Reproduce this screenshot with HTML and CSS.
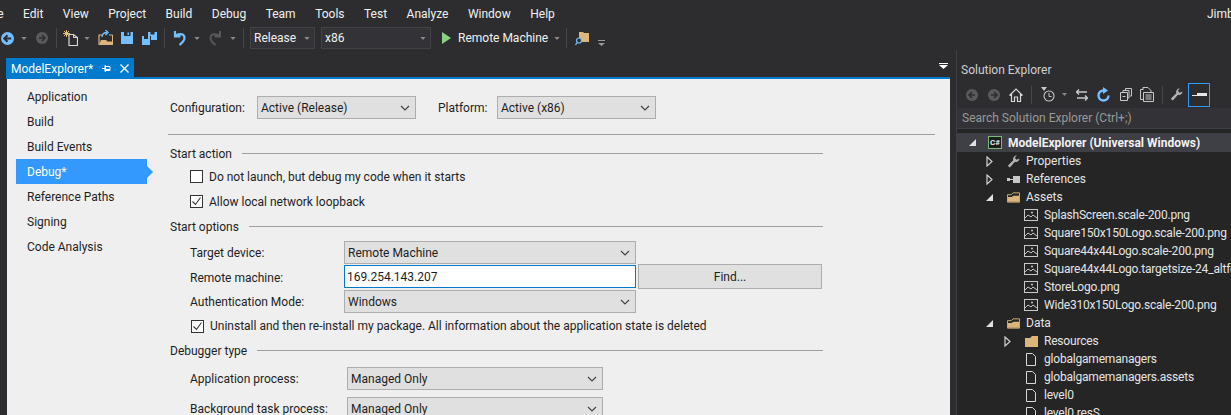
FILE: index.html
```html
<!DOCTYPE html>
<html lang="en">
<head>
    <meta charset="UTF-8">
    <title>ModelExplorer - Visual Studio</title>
    <link rel="stylesheet" href="styles.css">
</head>
<body>
    <svg class="defs" width="0" height="0">
        <symbol id="chev" viewBox="0 0 10 6"><path d="M1 1l4 4 4-4" fill="none" stroke="#444" stroke-width="1.2"/></symbol>
        <symbol id="dd" viewBox="0 0 7 4"><path d="M0 0h7L3.500 4z" fill="#8a8a8a"/></symbol>
        <symbol id="img" viewBox="0 0 14 12"><rect x=".5" y=".5" width="13" height="11" fill="none" stroke="#c8c8c8"/><path d="M1 9l3-3 3 2 2-2 4 3" fill="none" stroke="#c8c8c8"/><circle cx="8" cy="3.500" r="1" fill="#c8c8c8"/></symbol>
        <symbol id="doc" viewBox="0 0 11 13"><path d="M1 .5h6l3 3v9H1z" fill="none" stroke="#d8d8d8"/></symbol>
        <symbol id="folder" viewBox="0 0 14 11"><path d="M.5 10.500V2.500h4l2-2h7v10z" fill="#252526" stroke="#dcb67a"/><path d="M1 10V5h4l2-1.500h6V10z" fill="#dcb67a"/></symbol>
        <symbol id="open" viewBox="0 0 7 11"><path d="M1 1l5 4.500L1 10z" fill="none" stroke="#d0d0d0" stroke-width="1.200"/></symbol>
        <symbol id="down" viewBox="0 0 7 7"><path d="M7 0v7H0z" fill="#e0e0e0"/></symbol>
        <symbol id="wrench" viewBox="0 0 13 13"><path d="M12.500 3.500A3.500 3.500 0 0 1 8 6.800L2.800 12.500 .8 10.800 6.300 5.200A3.500 3.500 0 0 1 9.800.5L7.800 2.700 9.500 4.700z" fill="#b4b4b4"/></symbol>
        <symbol id="circ" viewBox="0 0 12 12"><circle cx="6" cy="6" r="6" fill="#5a5a5c"/><path d="M3 6h6M6 3l3 3-3 3" fill="none" stroke="#2d2d30" stroke-width="1.600"/></symbol>
    </svg>

    <div class="menubar">
        <div class="menu-items">
            <span class="file-menu">File</span>
            <span>Edit</span><span>View</span><span>Project</span><span>Build</span><span>Debug</span><span>Team</span><span>Tools</span><span>Test</span><span>Analyze</span><span>Window</span><span>Help</span>
        </div>
        <span class="user">Jimbo</span>
    </div>

    <div class="toolbar">
        <svg class="ti w-back" width="13" height="13" viewBox="0 0 12 12"><circle cx="6" cy="6" r="6" fill="#75beff"/><path d="M9.500 6H3M6 3L3 6l3 3" fill="none" stroke="#2d2d30" stroke-width="1.800"/></svg>
        <svg class="ti w-dd1" width="6" height="3"><use href="#dd"/></svg>
        <svg class="ti w-fwd" width="12" height="12"><use href="#circ"/></svg>
        <i class="tsep s1"></i>
        <svg class="ti w-new" width="15" height="16" viewBox="0 0 15 16"><path d="M6 4.500h4.500l4 3v8H6z" fill="none" stroke="#d8d8d8" stroke-width="1.200"/><path d="M10.500 4.500v3h4" fill="none" stroke="#d8d8d8"/><path d="M3.500 0v7M0 3.500h7M1 1l5 5M6 1L1 6" stroke="#e8c27a"/></svg>
        <svg class="ti w-dd2" width="6" height="3"><use href="#dd"/></svg>
        <svg class="ti w-open" width="15" height="16" viewBox="0 0 15 16"><path d="M1 15V5h3" fill="none" stroke="#dcb67a" stroke-width="1.200"/><path d="M14.500 15V5H11" fill="none" stroke="#dcb67a"/><path d="M1 15l2-5h5l1.500 1.500H14V15z" fill="#dcb67a"/><path d="M4 7c0-3 2-4.500 5-4.500M7.500 0L10 2.500 7.500 5" fill="none" stroke="#75beff" stroke-width="1.400"/></svg>
        <svg class="ti w-save" width="12" height="12" viewBox="0 0 12 12"><path d="M0 0h12v12H0z" fill="#75beff"/><path d="M3 0h6.500v4H3z" fill="#2d2d30"/><path d="M6.500 .5h1.500v2.500H6.500z" fill="#75beff"/></svg>
        <svg class="ti w-saveall" width="15" height="13" viewBox="0 0 15 13"><path d="M6 0h9v8H9V4H6z" fill="#75beff"/><path d="M8.500 0h4v2.500h-4z" fill="#2d2d30"/><path d="M0 4h8v9H0z" fill="#75beff"/><path d="M2 4h4v3H2z" fill="#2d2d30"/></svg>
        <i class="tsep s2"></i>
        <svg class="ti w-undo" width="13" height="16" viewBox="0 0 13 16"><path d="M2 1v5.500h5.500M2.500 6C5 3.500 11.500 3 11.500 8c0 3-2 4.500-5 7" fill="none" stroke="#75beff" stroke-width="2.200"/></svg>
        <svg class="ti w-dd3" width="6" height="3"><use href="#dd"/></svg>
        <svg class="ti w-redo" width="13" height="16" viewBox="0 0 13 16"><path d="M11 1v5.500H5.500M10.500 6C8 3.500 1.500 3 1.500 8c0 3 2 4.500 5 7" fill="none" stroke="#58585a" stroke-width="2"/></svg>
        <svg class="ti w-dd4" width="6" height="3"><use href="#dd"/></svg>
        <i class="tsep s3"></i>
        <div class="combo combo-config"><span>Release</span><svg width="6" height="3"><use href="#dd"/></svg></div>
        <div class="combo combo-plat"><span>x86</span><svg width="6" height="3"><use href="#dd"/></svg></div>
        <svg class="ti w-play" width="9" height="12" viewBox="0 0 9 12"><path d="M0 0l9 6-9 6z" fill="#89d185"/></svg>
        <span class="run-label">Remote Machine</span>
        <svg class="ti w-dd5" width="6" height="3"><use href="#dd"/></svg>
        <i class="tsep s4"></i>
        <svg class="ti w-find" width="15" height="15" viewBox="0 0 15 15"><path d="M4 1h4l1 1h5v9H6V7H4z" fill="#dcb67a"/><circle cx="4" cy="9.500" r="2.500" fill="#2d2d30" stroke="#75beff" stroke-width="1.200"/><path d="M2.200 11.500L.5 14" stroke="#75beff" stroke-width="1.300"/></svg>
        <svg class="ti w-over" width="7" height="6" viewBox="0 0 7 6"><path d="M0 0h7v1H0zM0 3h7L3.500 6z" fill="#9a9a9a"/></svg>
    </div>

    <div class="workspace">
        <div class="document">
            <div class="tabstrip">
                <div class="tab">
                    <span>ModelExplorer*</span>
                    <svg width="9" height="9" viewBox="0 0 9 9"><path d="M0 4.500h3M3 1.500h.5v6H3zM3.500 2.500H8v4H3.500M3.500 5.500H8" fill="none" stroke="#fff"/></svg>
                    <svg width="9" height="9" viewBox="0 0 9 9"><path d="M.5.500l8 8M8.500.5l-8 8" stroke="#fff" stroke-width="1.300"/></svg>
                </div>
                <svg class="tab-more" width="9" height="6" viewBox="0 0 9 6"><path d="M0 0h9v1H0zM0 2h9L4.500 6z" fill="#fff"/></svg>
            </div>
            <div class="page">
                <ul class="prop-nav">
                    <li>Application</li>
                    <li>Build</li>
                    <li>Build Events</li>
                    <li class="active">Debug*</li>
                    <li>Reference Paths</li>
                    <li>Signing</li>
                    <li>Code Analysis</li>
                </ul>
                <div class="form">
                    <div class="config-row">
                        <label class="config-label">Configuration:</label>
                        <div class="select config-select">Active (Release)<svg width="10" height="6"><use href="#chev"/></svg></div>
                        <label class="platform-label">Platform:</label>
                        <div class="select config-select">Active (x86)<svg width="10" height="6"><use href="#chev"/></svg></div>
                    </div>
                    <hr class="rule">

                    <div class="group-head"><span>Start action</span><i></i></div>
                    <div class="check-row first"><b class="box"></b>Do not launch, but debug my code when it starts</div>
                    <div class="check-row"><b class="box"><svg width="11" height="11" viewBox="0 0 11 11"><path d="M1.500 5.500l3 3 5-7" fill="none" stroke="#333" stroke-width="1.100"/></svg></b>Allow local network loopback</div>

                    <div class="group-head"><span>Start options</span><i></i></div>
                    <div class="field target-row">
                        <label>Target device:</label>
                        <div class="select wide">Remote Machine<svg width="10" height="6"><use href="#chev"/></svg></div>
                    </div>
                    <div class="field remote-row">
                        <label>Remote machine:</label>
                        <div class="text-input">169.254.143.207</div>
                        <div class="find-btn">Find...</div>
                    </div>
                    <div class="field auth-row">
                        <label>Authentication Mode:</label>
                        <div class="select wide">Windows<svg width="10" height="6"><use href="#chev"/></svg></div>
                    </div>
                    <div class="check-row uninstall"><b class="box"><svg width="11" height="11" viewBox="0 0 11 11"><path d="M1.500 5.500l3 3 5-7" fill="none" stroke="#333" stroke-width="1.100"/></svg></b>Uninstall and then re-install my package. All information about the application state is deleted</div>

                    <div class="group-head"><span>Debugger type</span><i></i></div>
                    <div class="field process-row first">
                        <label>Application process:</label>
                        <div class="select process">Managed Only<svg width="10" height="6"><use href="#chev"/></svg></div>
                    </div>
                    <div class="field process-row">
                        <label>Background task process:</label>
                        <div class="select process">Managed Only<svg width="10" height="6"><use href="#chev"/></svg></div>
                    </div>
                </div>
            </div>
        </div>

        <div class="solution">
            <div class="sol-title"><span>Solution Explorer</span><i></i></div>
            <div class="sol-tools">
                <svg class="st back" width="12" height="12" viewBox="0 0 12 12"><circle cx="6" cy="6" r="6" fill="#5a5a5c"/><path d="M9 6H3M6 3L3 6l3 3" fill="none" stroke="#2d2d30" stroke-width="1.600"/></svg>
                <svg class="st fwd" width="12" height="12"><use href="#circ"/></svg>
                <svg class="st home" width="14" height="14" viewBox="0 0 14 14"><path d="M.5 7.500L7 1l6.500 6.500M2.500 6v7.500h3V9h3v4.500h3V6" fill="none" stroke="#d8d8d8" stroke-width="1.200"/></svg>
                <i class="st-sep"></i>
                <svg class="st hist" width="14" height="15" viewBox="0 0 14 15"><circle cx="8" cy="9" r="5" fill="none" stroke="#c8c8c8" stroke-width="1.100"/><path d="M8 6v3.500h2.500" fill="none" stroke="#c8c8c8"/><path d="M0 0h6L3 4z" fill="#c8c8c8"/></svg>
                <svg class="st hist-dd" width="5" height="3"><use href="#dd"/></svg>
                <svg class="st sync" width="12" height="12" viewBox="0 0 12 12"><path d="M3 .5L.5 3 3 5.500M.5 3H11M9 6.500L11.500 9 9 11.500M11.500 9H1" fill="none" stroke="#c8c8c8" stroke-width="1.400"/></svg>
                <svg class="st refresh" width="13" height="15" viewBox="0 0 13 15"><path d="M6.500 3.500a5 5 0 1 0 5 5" fill="none" stroke="#75beff" stroke-width="2.400"/><path d="M6 0v7l5-3.500z" fill="#75beff"/></svg>
                <svg class="st coll" width="12" height="13" viewBox="0 0 12 13"><path d="M.5 4.500h7v8h-7zM2.500 8.500h3M3 4V2.500h6V10H8M5.500 2V.5h6V8H10" fill="none" stroke="#c8c8c8"/></svg>
                <svg class="st pages" width="14" height="15" viewBox="0 0 14 15"><path d="M3 2V.5h5l3 3V5M3.500 12.500H.5V2.500h3M3.500 5.500h10v9h-10z" fill="none" stroke="#c8c8c8"/><path d="M5.500 8h6M5.500 10h6M5.500 12h6" stroke="#c8c8c8"/></svg>
                <i class="st-sep two"></i>
                <svg class="st wrench" width="13" height="13"><use href="#wrench"/></svg>
                <div class="pin-btn"><svg width="15" height="5" viewBox="0 0 15 5"><path d="M0 3h6v1H0zM5 1h10v3H5z" fill="#e8e8e8"/></svg></div>
            </div>
            <div class="sol-search">Search Solution Explorer (Ctrl+;)</div>
            <div class="tree">
                <div class="node root"><svg class="tw" width="7" height="7"><use href="#down"/></svg><span class="cs-icon">C#</span>ModelExplorer (Universal Windows)</div>
                <div class="node l1"><svg class="tw" width="7" height="11"><use href="#open"/></svg><svg class="ic" width="13" height="13"><use href="#wrench"/></svg>Properties</div>
                <div class="node l1"><svg class="tw" width="7" height="11"><use href="#open"/></svg><svg class="ic" width="13" height="13" viewBox="0 0 13 13"><path d="M0 5h3v3H0zM6 3h7v7H6z" fill="#c8c8c8"/><path d="M3 6.500h3" stroke="#c8c8c8"/></svg>References</div>
                <div class="node l1"><svg class="tw" width="7" height="7"><use href="#down"/></svg><svg class="ic" width="13" height="11"><use href="#folder"/></svg>Assets</div>
                <div class="node l2"><svg class="ic" width="14" height="12"><use href="#img"/></svg>SplashScreen.scale-200.png</div>
                <div class="node l2"><svg class="ic" width="14" height="12"><use href="#img"/></svg>Square150x150Logo.scale-200.png</div>
                <div class="node l2"><svg class="ic" width="14" height="12"><use href="#img"/></svg>Square44x44Logo.scale-200.png</div>
                <div class="node l2"><svg class="ic" width="14" height="12"><use href="#img"/></svg>Square44x44Logo.targetsize-24_altform-unplated.png</div>
                <div class="node l2"><svg class="ic" width="14" height="12"><use href="#img"/></svg>StoreLogo.png</div>
                <div class="node l2"><svg class="ic" width="14" height="12"><use href="#img"/></svg>Wide310x150Logo.scale-200.png</div>
                <div class="node l1"><svg class="tw" width="7" height="7"><use href="#down"/></svg><svg class="ic" width="13" height="11"><use href="#folder"/></svg>Data</div>
                <div class="node l2 has-tw"><svg class="tw" width="7" height="11"><use href="#open"/></svg><svg class="ic" width="13" height="11" viewBox="0 0 13 11"><path d="M0 2h5l2-2h6v11H0z" fill="#dcb67a"/></svg>Resources</div>
                <div class="node l2"><svg class="ic" width="14" height="13"><use href="#doc"/></svg>globalgamemanagers</div>
                <div class="node l2"><svg class="ic" width="14" height="13"><use href="#doc"/></svg>globalgamemanagers.assets</div>
                <div class="node l2"><svg class="ic" width="14" height="13"><use href="#doc"/></svg>level0</div>
                <div class="node l2"><svg class="ic" width="14" height="13"><use href="#doc"/></svg>level0.resS</div>
            </div>
        </div>
    </div>
</body>
</html>
```

FILE: styles.css
```css
* {
    box-sizing: border-box;
}
html, body {
    height: 415px;
    overflow: hidden;
}
body {
    margin: 0;
    background-color: #2d2d30;
    color: #f1f1f1;
    font-family: Roboto, Arial, sans-serif;
    font-size: 12px;
    line-height: 16px;
    white-space: nowrap;
}
.defs {
    display: block;
    height: 0;
}
svg {
    display: block;
    flex: none;
}

/* menu */
.menubar {
    display: flex;
    justify-content: space-between;
    height: 26px;
    padding-top: 6px;
    overflow: hidden;
}
.menu-items {
    display: flex;
    gap: 19.5px;
    margin-left: -20px;
}
.file-menu {
    width: 23.5px;
    text-align: right;
}
.user {
    width: 24px;
    overflow: hidden;
}

/* toolbar */
.toolbar {
    display: flex;
    align-items: center;
    height: 24px;
}
.tsep {
    width: 1px;
    height: 20px;
    background-color: #46464a;
}
.w-back { margin-left: 1px; }
.w-dd1 { margin-left: 7px; }
.w-fwd { margin-left: 9px; }
.s1 { margin-left: 8px; }
.w-new { margin-left: 6px; }
.w-dd2 { margin-left: 6px; }
.w-open { margin-left: 8px; }
.w-save { margin-left: 8px; }
.w-saveall { margin-left: 9px; }
.s2 { margin-left: 7px; }
.w-undo { margin-left: 8px; }
.w-dd3 { margin-left: 8px; }
.w-redo { margin-left: 9px; }
.w-dd4 { margin-left: 8px; }
.s3 { margin-left: 7px; }
.combo {
    display: flex;
    align-items: center;
    justify-content: space-between;
    height: 22px;
    padding: 0 4px 0 3px;
    background-color: #333337;
    border: 1px solid #434346;
}
.combo-config {
    width: 65px;
    margin-left: 6px;
}
.combo-plat {
    width: 110px;
    margin-left: 6px;
}
.w-play { margin-left: 11px; }
.run-label { margin-left: 7px; width: 90px; }
.w-dd5 { margin-left: 6px; }
.s4 { margin-left: 6px; }
.w-find { margin-left: 8px; }
.w-over { margin-left: 8px; margin-top: 10px; }

/* document area */
.workspace {
    display: flex;
    height: 365px;
}
.document {
    width: 956px;
    padding-left: 6px;
    padding-top: 8px;
    padding-right: 6px;
}
.tabstrip {
    display: flex;
    align-items: center;
    justify-content: space-between;
    height: 21px;
    border-bottom: 2px solid #007acc;
}
.tab {
    display: flex;
    align-items: center;
    width: 128px;
    height: 21px;
    margin-bottom: -2px;
    padding: 0 5px;
    background-color: #007acc;
    color: #fff;
}
.tab span {
    width: 91px;
}
.tab svg + svg {
    margin-left: 9px;
}
.tab-more {
    margin-right: 2px;
    margin-bottom: 4px;
}
.page {
    display: flex;
    height: 336px;
    margin-left: 1px;
    background-color: #efefef;
    color: #1e1e1e;
    overflow: hidden;
}

/* property page tabs */
.prop-nav {
    width: 161px;
    margin: 5px 0 0;
    padding: 0 0 0 9px;
    list-style-type: none;
    flex: none;
}
.prop-nav li {
    position: relative;
    width: 131px;
    height: 25px;
    padding-left: 11px;
    line-height: 27px;
}
.prop-nav .active {
    background-color: #3399ff;
    color: #fff;
}
.prop-nav .active::after {
    content: "";
    position: absolute;
    left: 100%;
    top: 7px;
    border-left: 6px solid #3399ff;
    border-top: 6px solid transparent;
    border-bottom: 6px solid transparent;
}

/* form */
.form {
    flex: 1;
    padding-top: 17px;
    padding-right: 15px;
}
.config-row {
    display: flex;
    align-items: center;
    height: 23px;
    padding-left: 2px;
}
.config-label {
    width: 87px;
}
.platform-label {
    width: 59px;
    margin-left: 22px;
}
.select {
    display: flex;
    align-items: center;
    justify-content: space-between;
    height: 23px;
    padding: 0 5px 0 3px;
    background-color: #e0e0e0;
    border: 1px solid #adadad;
}
.config-select {
    width: 159px;
}
.rule {
    height: 0;
    margin: 15px 0 6px;
    border: 0;
    border-top: 1px solid #a0a0a0;
}
.group-head {
    display: flex;
    align-items: center;
    gap: 10px;
    width: 655px;
    height: 24px;
    padding-left: 2px;
}
.group-head span {
    padding-top: 2px;
}
.group-head i {
    flex: 1;
    height: 1px;
    background-color: #a0a0a0;
}
.check-row {
    display: flex;
    align-items: center;
    height: 25px;
    padding-left: 22px;
}
.check-row.first {
    margin-top: -1px;
}
.box {
    display: block;
    width: 13px;
    height: 13px;
    margin-right: 6px;
    background-color: #fff;
    border: 1px solid #333;
    flex: none;
}
.uninstall {
    height: 24px;
    margin-top: 1px;
    padding-left: 23px;
}
.field {
    display: flex;
    align-items: center;
    padding-left: 22px;
}
.field label {
    width: 154px;
    flex: none;
}
.target-row {
    margin-top: 3px;
    height: 23px;
}
.remote-row {
    height: 25px;
}
.remote-row label {
    padding-top: 2px;
}
.auth-row {
    height: 23px;
    margin-top: 1px;
}
.wide {
    width: 292px;
}
.text-input {
    width: 292px;
    height: 23px;
    padding-left: 2px;
    background-color: #fff;
    border: 1px solid #007acc;
    line-height: 23px;
}
.find-btn {
    width: 184px;
    height: 25px;
    margin-left: 2px;
    background-color: #e0e0e0;
    border: 1px solid #adadad;
    text-align: center;
    line-height: 25px;
}
.process-row {
    height: 23px;
    margin-top: 7px;
}
.process-row.first {
    margin-top: 5px;
}
.process-row label {
    width: 157px;
}
.process {
    width: 256px;
}

/* solution explorer */
.solution {
    flex: 1;
    min-width: 0;
    border-left: 1px solid #3f3f46;
    overflow: hidden;
}
.sol-title {
    display: flex;
    align-items: center;
    gap: 8px;
    height: 24px;
    margin-top: 8px;
    padding-left: 4px;
    color: #d0d0d0;
}
.sol-title i {
    flex: 1;
    height: 5px;
    background-image: radial-gradient(#46464a .7px, transparent .7px);
    background-size: 4px 2px;
}
.sol-tools {
    display: flex;
    align-items: center;
    height: 25px;
}
.st.back { margin-left: 9px; }
.st.fwd { margin-left: 10px; }
.st.home { margin-left: 9px; }
.st-sep {
    width: 1px;
    height: 18px;
    margin-left: 8px;
    background-color: #46464a;
}
.st.hist { margin-left: 9px; }
.st.hist-dd { margin-left: 7px; }
.st.sync { margin-left: 9px; }
.st.refresh { margin-left: 9px; }
.st.coll { margin-left: 10px; }
.st.pages { margin-left: 8px; }
.st-sep.two { margin-left: 8px; }
.st.wrench { margin-left: 7px; }
.pin-btn {
    display: flex;
    align-items: center;
    justify-content: center;
    width: 22px;
    height: 24px;
    margin-left: 5px;
    border: 1px solid #3399ff;
}
.sol-search {
    height: 21px;
    margin-top: 1px;
    padding-left: 5px;
    background-color: #333337;
    border-bottom: 1px solid #3f3f46;
    color: #999;
    line-height: 20px;
}
.tree {
    margin-top: 4px;
    height: 290px;
    background-color: #252526;
    overflow: hidden;
    box-shadow: 0 -4px 0 #252526;
}
.node {
    position: relative;
    display: flex;
    align-items: center;
    height: 18px;
    color: #e4e4e4;
}
.node .tw {
    margin-right: 14px;
}
.root {
    height: 19px;
    padding-left: 12px;
    background-color: #3f3f46;
    color: #f1f1f1;
    font-weight: 700;
}
.node.root .tw {
    margin-right: 12px;
}
.cs-icon {
    display: block;
    width: 14px;
    height: 13px;
    margin-right: 6px;
    border: 1px solid #7bb87b;
    background-color: #1e1e1e;
    color: #e8e8e8;
    font-size: 8px;
    line-height: 11px;
    text-align: center;
}
.l1 {
    padding-left: 29px;
}
.l1 .ic {
    margin-right: 6px;
}
.l2 {
    padding-left: 67px;
    letter-spacing: -0.2px;
}
.l2 .ic {
    margin-right: 6px;
}
.has-tw {
    padding-left: 47px;
}
```
